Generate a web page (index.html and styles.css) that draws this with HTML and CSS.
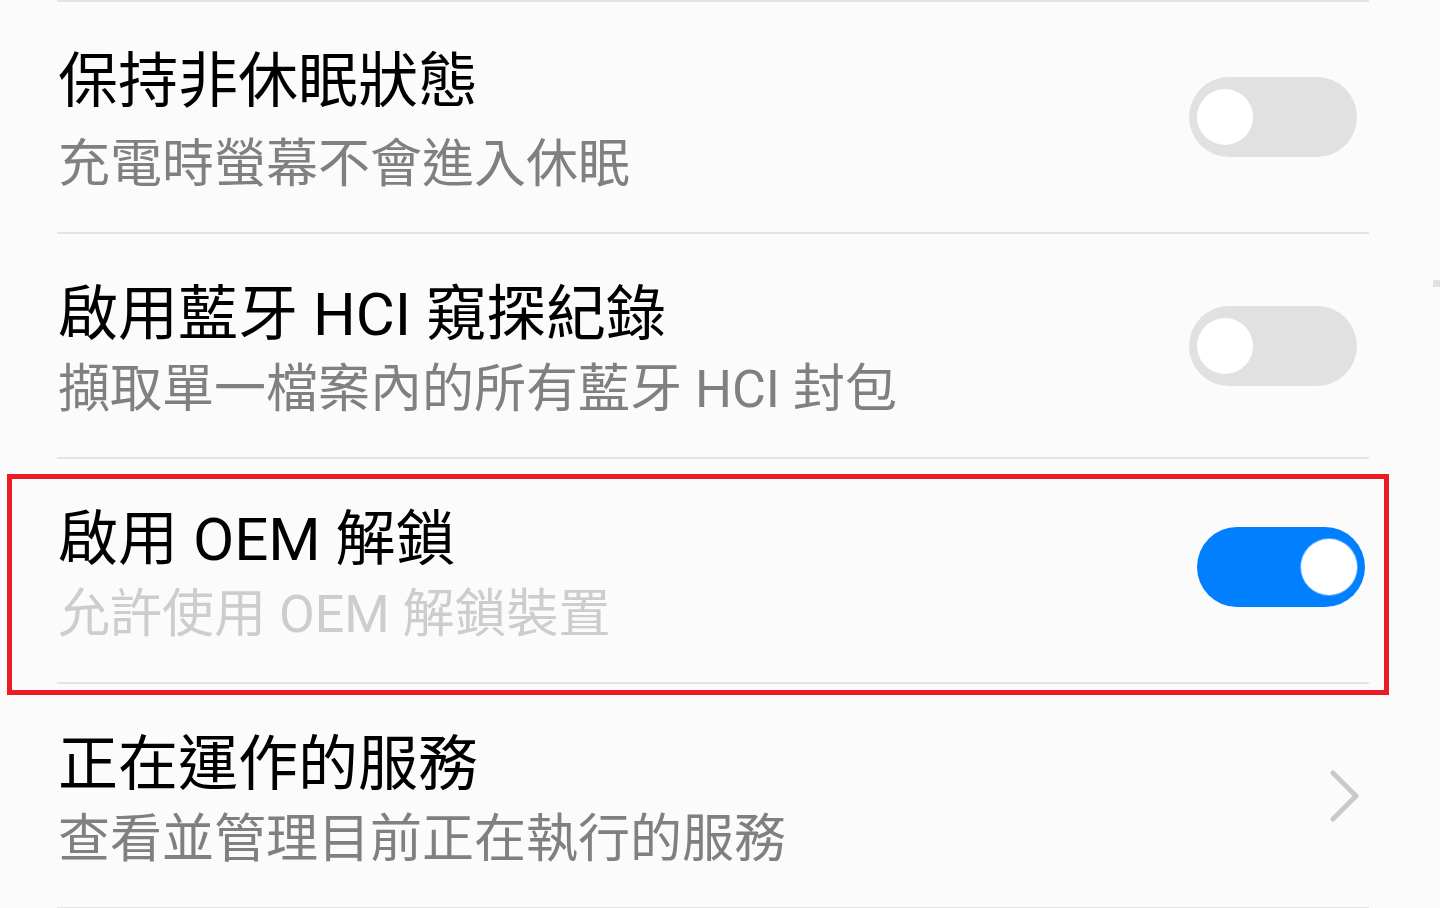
FILE: index.html
```html
<!DOCTYPE html>
<html lang="zh-Hant">
<head>
<meta charset="utf-8">
<title>開發人員選項</title>
<link rel="stylesheet" href="styles.css">
</head>
<body>
<div class="screen">
  <div class="list">
    <div class="row row--first">
      <div class="text text--first">
        <div class="title">保持非休眠狀態</div>
        <div class="summary">充電時螢幕不會進入休眠</div>
      </div>
      <div class="toggle"></div>
    </div>
    <div class="row">
      <div class="text">
        <div class="title">啟用藍牙 HCI 窺探紀錄</div>
        <div class="summary">擷取單一檔案內的所有藍牙 HCI 封包</div>
      </div>
      <div class="toggle"></div>
    </div>
    <div class="row">
      <div class="text">
        <div class="title">啟用 OEM 解鎖</div>
        <div class="summary summary--disabled">允許使用 OEM 解鎖裝置</div>
      </div>
      <div class="toggle toggle--on"></div>
    </div>
    <div class="row">
      <div class="text">
        <div class="title">正在運作的服務</div>
        <div class="summary">查看並管理目前正在執行的服務</div>
      </div>
      <svg class="chevron" width="30" height="52" viewBox="0 0 30 52">
        <polyline points="3,3 26,26 3,49" fill="none" stroke="#c9c9c9" stroke-width="5" stroke-linecap="round" stroke-linejoin="round"/>
      </svg>
    </div>
  </div>
  <div class="scroll-mark"></div>
  <div class="highlight"></div>
</div>
</body>
</html>
```

FILE: styles.css
```css
html, body {
  margin: 0;
  padding: 0;
}

body {
  background: #fbfbfb;
  font-family: "Roboto", "Noto Sans CJK TC", sans-serif;
}

.screen {
  position: relative;
  width: 1440px;
  height: 908px;
  overflow: hidden;
}

.list {
  margin: 0 71px 0 57px;
  border-top: 2px solid #e4e4e4;
}

.row {
  display: flex;
  align-items: center;
  height: 223px;
  border-bottom: 2px solid #e4e4e4;
}

.row--first {
  height: 230px;
}

.text {
  flex: 1;
  align-self: stretch;
  display: flex;
  flex-direction: column;
  gap: 10px;
  padding: 46px 0 0 1px;
}

.text--first {
  padding-top: 45px;
  gap: 18px;
}

.title {
  font-size: 60px;
  line-height: 70px;
  color: #000;
  white-space: nowrap;
}

.summary {
  font-size: 52px;
  line-height: 60px;
  color: #808080;
  white-space: nowrap;
}

.summary--disabled {
  color: #cdcdcd;
}

.toggle {
  position: relative;
  width: 168px;
  height: 80px;
  border-radius: 40px;
  background: #e1e1e1;
  margin-right: 12px;
  flex: none;
}

.toggle::after {
  content: "";
  position: absolute;
  left: 8px;
  top: 12px;
  width: 56px;
  height: 56px;
  border-radius: 50%;
  background: #fff;
}

.toggle--on {
  background: #007fff;
  margin-right: 4px;
  margin-bottom: 7px;
}

.toggle--on::after {
  left: 104px;
  box-shadow: 0 0 0 1px rgba(255, 255, 255, 0.35);
}

.chevron {
  flex: none;
  margin-right: 9px;
  display: block;
}

.scroll-mark {
  position: absolute;
  right: 0;
  top: 280px;
  width: 7px;
  height: 7px;
  background: #e0e0e0;
}

.highlight {
  position: absolute;
  left: 7px;
  top: 474px;
  width: 1382px;
  height: 221px;
  box-sizing: border-box;
  border: 5px solid #ed1c24;
}
```
